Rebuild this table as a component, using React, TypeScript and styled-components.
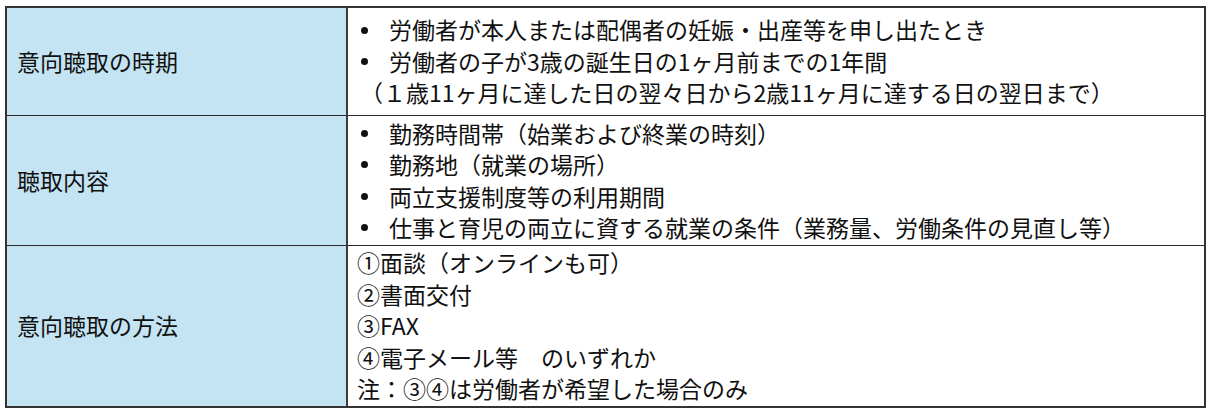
import React from 'react';
import styled, { createGlobalStyle } from 'styled-components';

const GlobalStyle = createGlobalStyle`
  body {
    margin: 0;
    background: #ffffff;
    font-family: 'Noto Sans CJK JP', 'Noto Sans', sans-serif;
    color: #111111;
  }
`;

type Row = {
  heading: string;
  height: number;
  bullets?: string[];
  note?: string;
  lines?: string[];
};

const rows: Row[] = [
  {
    heading: '意向聴取の時期',
    height: 109,
    bullets: [
      '労働者が本人または配偶者の妊娠・出産等を申し出たとき',
      '労働者の子が3歳の誕生日の1ヶ月前までの1年間',
    ],
    note: '（１歳11ヶ月に達した日の翌々日から2歳11ヶ月に達する日の翌日まで）',
  },
  {
    heading: '聴取内容',
    height: 131,
    bullets: [
      '勤務時間帯（始業および終業の時刻）',
      '勤務地（就業の場所）',
      '両立支援制度等の利用期間',
      '仕事と育児の両立に資する就業の条件（業務量、労働条件の見直し等）',
    ],
  },
  {
    heading: '意向聴取の方法',
    height: 162,
    lines: [
      '①面談（オンラインも可）',
      '②書面交付',
      '③FAX',
      '④電子メール等　のいずれか',
      '注：③④は労働者が希望した場合のみ',
    ],
  },
];

const App: React.FC = () => {
  return (
    <>
      <GlobalStyle />
      <Page>
        <Table>
          {rows.map((row, i) => (
            <React.Fragment key={row.heading}>
              <HeadCell $height={row.height} $first={i === 0}>
                {row.heading}
              </HeadCell>
              <BodyCell $height={row.height} $first={i === 0} $plain={!!row.lines}>
                {row.bullets &&
                  row.bullets.map(text => (
                    <Item key={text}>
                      <Bullet />
                      <span>{text}</span>
                    </Item>
                  ))}
                {row.note && <Line>{row.note}</Line>}
                {row.lines && row.lines.map(text => <Line key={text}>{text}</Line>)}
              </BodyCell>
            </React.Fragment>
          ))}
        </Table>
      </Page>
    </>
  );
};

const Page = styled.div`
  padding: 6px 6px 0 5px;
`;

const Table = styled.div`
  width: 1201px;
  display: grid;
  grid-template-columns: 341px 1fr;
  border: 2px solid #333333;
  box-sizing: border-box;
  font-size: 23px;
  line-height: 31.5px;
`;

const HeadCell = styled.div<{ $height: number; $first: boolean }>`
  height: ${p => p.$height - (p.$first ? 2 : 1)}px;
  background: #c4e4f3;
  border-top: ${p => (p.$first ? 'none' : '1px solid #2a2a2a')};
  border-right: 2px solid #3a3a3a;
  display: flex;
  align-items: center;
  padding-left: 10px;
  box-sizing: border-box;
`;

const BodyCell = styled.div<{ $height: number; $first: boolean; $plain: boolean }>`
  height: ${p => p.$height - (p.$first ? 2 : 1)}px;
  border-top: ${p => (p.$first ? 'none' : '1px solid #2a2a2a')};
  display: flex;
  flex-direction: column;
  justify-content: center;
  padding-left: ${p => (p.$plain ? 9 : 12)}px;
  box-sizing: border-box;
  white-space: nowrap;
`;

const Item = styled.div`
  display: flex;
  align-items: center;
`;

const Bullet = styled.span`
  width: 29px;
  flex: none;
  display: flex;
  align-items: center;

  &::before {
    content: '';
    width: 7px;
    height: 7px;
    margin-left: 1px;
    border-radius: 50%;
    background: #111111;
  }
`;

const Line = styled.div``;

export default App;
